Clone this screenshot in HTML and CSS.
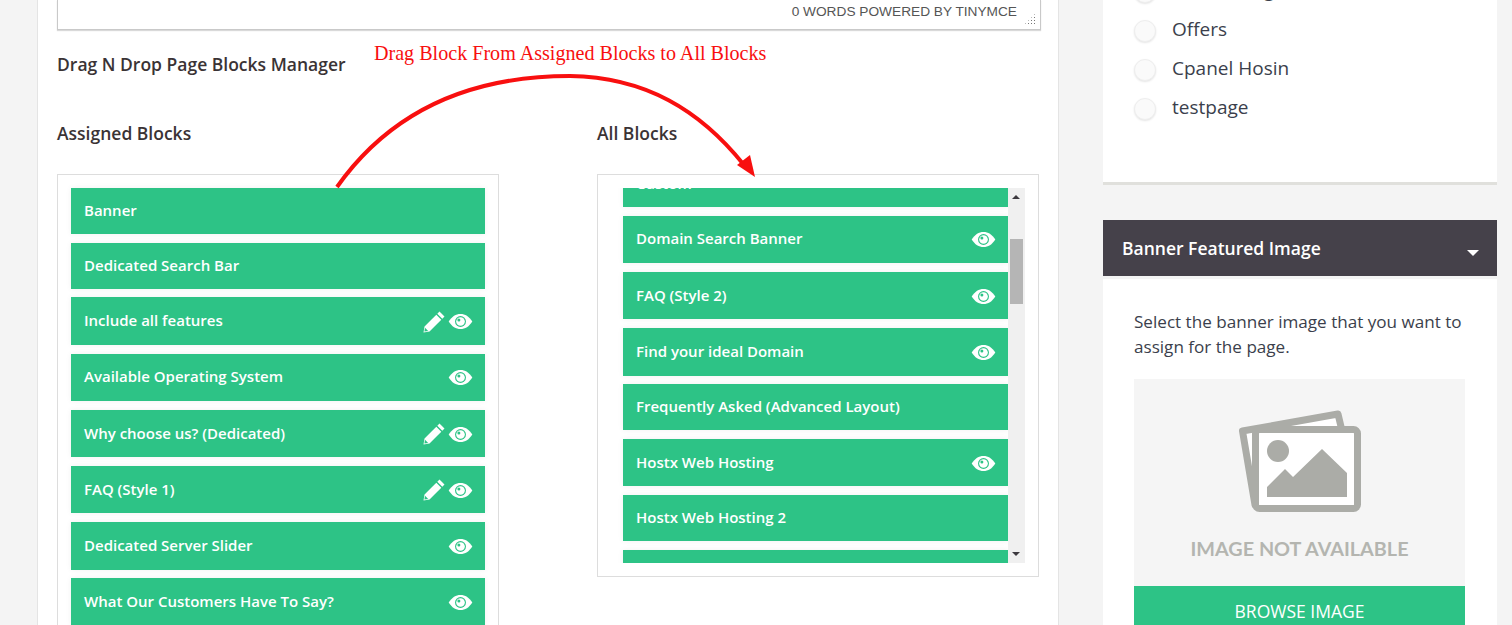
FILE: index.html

```html
<!DOCTYPE html>
<html lang="en">
<head>
    <meta charset="UTF-8">
    <title>Page Blocks Manager</title>
    <link rel="stylesheet" href="styles.css">
</head>
<body>
    <svg width="0" height="0" class="defs">
        <symbol id="eye" viewBox="0 0 26 18">
            <path d="M0.5 9C4 3.5 8 1 13 1s9 2.500 12.500 8C22 14.500 18 17 13 17S4 14.500 0.500 9z" fill="#fff"/>
            <circle cx="13" cy="9" r="5.800" fill="#2dc386"/>
            <circle cx="13" cy="9" r="4.600" fill="#fff"/>
            <circle cx="11.300" cy="7.300" r="1.600" fill="#2dc386"/>
        </symbol>
        <symbol id="pencil" viewBox="0 0 22 22">
            <path d="M16.500 0.500l5 5-2.200 2.200-5-5zM13.300 3.700l5 5L6.500 20.500 0.500 21.500l1-6z" fill="#fff"/>
            <path d="M2 16.800l3.200 3.200-3.800.6z" fill="#2dc386"/>
        </symbol>
    </svg>

    <div class="page">
        <div class="main">
            <div class="editor">
                <span class="editor-status">0 WORDS POWERED BY TINYMCE</span>
                <span class="grip"></span>
            </div>
            <h3 class="manager-title">Drag N Drop Page Blocks Manager</h3>
            <div class="columns">
                <div class="column">
                    <h4>Assigned Blocks</h4>
                    <div class="block-box">
                        <div class="block short">Banner</div>
                        <div class="block short">Dedicated Search Bar</div>
                        <div class="block">Include all features
                            <span class="icons"><svg class="pencil"><use href="#pencil"/></svg><svg class="eye"><use href="#eye"/></svg></span></div>
                        <div class="block">Available Operating System
                            <span class="icons"><svg class="eye"><use href="#eye"/></svg></span></div>
                        <div class="block">Why choose us? (Dedicated)
                            <span class="icons"><svg class="pencil"><use href="#pencil"/></svg><svg class="eye"><use href="#eye"/></svg></span></div>
                        <div class="block">FAQ (Style 1)
                            <span class="icons"><svg class="pencil"><use href="#pencil"/></svg><svg class="eye"><use href="#eye"/></svg></span></div>
                        <div class="block">Dedicated Server Slider
                            <span class="icons"><svg class="eye"><use href="#eye"/></svg></span></div>
                        <div class="block">What Our Customers Have To Say?
                            <span class="icons"><svg class="eye"><use href="#eye"/></svg></span></div>
                    </div>
                </div>
                <div class="column">
                    <h4>All Blocks</h4>
                    <div class="block-box all-box">
                        <div class="scroll-list">
                            <div class="block short first">Custom</div>
                            <div class="block">Domain Search Banner
                                <span class="icons"><svg class="eye"><use href="#eye"/></svg></span></div>
                            <div class="block">FAQ (Style 2)
                                <span class="icons"><svg class="eye"><use href="#eye"/></svg></span></div>
                            <div class="block">Find your ideal Domain
                                <span class="icons"><svg class="eye"><use href="#eye"/></svg></span></div>
                            <div class="block short">Frequently Asked (Advanced Layout)</div>
                            <div class="block">Hostx Web Hosting
                                <span class="icons"><svg class="eye"><use href="#eye"/></svg></span></div>
                            <div class="block short">Hostx Web Hosting 2</div>
                            <div class="block short"></div>
                        </div>
                        <div class="scrollbar">
                            <span class="arrow-up"></span>
                            <span class="thumb"></span>
                            <span class="arrow-down"></span>
                        </div>
                    </div>
                </div>
            </div>
        </div>

        <div class="sidebar">
            <div class="card pages-card">
                <ul class="radio-list">
                    <li><span class="radio"></span>Web Listing</li>
                    <li><span class="radio"></span>Offers</li>
                    <li><span class="radio"></span>Cpanel Hosin</li>
                    <li><span class="radio"></span>testpage</li>
                </ul>
            </div>
            <div class="card-head">Banner Featured Image <span class="caret"></span></div>
            <div class="card image-card">
                <p>Select the banner image that you want to assign for the page.</p>
                <div class="placeholder">
                    <svg class="photo" viewBox="0 0 130 112" width="130" height="112">
                        <path d="M7.500 26L103 9L108 30L20 100z" fill="#fff" stroke="#abaca7" stroke-width="7" stroke-linejoin="round"/>
                        <rect x="20.500" y="24.500" width="102" height="79" rx="4" fill="#fff" stroke="#abaca7" stroke-width="7"/>
                        <circle cx="43" cy="46" r="11" fill="#abaca7"/>
                        <path d="M32 92V82L50 64L58 72L87 44L112 68V92z" fill="#abaca7"/>
                    </svg>
                    <span class="no-image">IMAGE NOT AVAILABLE</span>
                </div>
                <div class="browse">BROWSE IMAGE</div>
            </div>
        </div>

        <div class="note">Drag Block From Assigned Blocks to All Blocks</div>
        <svg class="arrow" width="1512" height="625" viewBox="0 0 1512 625">
            <path d="M337 187C395 105 480 76 570 76C645 77 700 110 744 165" fill="none" stroke="#f80f0f" stroke-width="4"/>
            <path d="M755 177L737 165L750 155z" fill="#f80f0f"/>
        </svg>
    </div>
</body>
</html>
```

FILE: styles.css

```css
* {
    box-sizing: border-box;
}
html, body {
    margin: 0;
    height: 625px;
    overflow: hidden;
}
body {
    font-family: "Open Sans", Arial, sans-serif;
    background-color: #f4f4f4;
    color: #333;
}
.defs {
    display: block;
    position: absolute;
}
.page {
    display: flex;
    align-items: flex-start;
    padding-left: 37px;
    height: 625px;
    overflow: hidden;
}

/* left panel */
.main {
    width: 1022px;
    height: 625px;
    padding: 0 17px 0 19px;
    background: white;
    border-left: 1px solid #e4e4e4;
    border-right: 1px solid #e4e4e4;
}
.editor {
    display: flex;
    align-items: center;
    justify-content: flex-end;
    height: 30px;
    padding: 0 23px 6px 0;
    border: 1px solid #c9c9c9;
    border-top: none;
    box-shadow: 0 1px 1px rgba(0, 0, 0, 0.15);
    font-family: "Liberation Sans", Arial, sans-serif;
    font-size: 13.700px;
    color: #555;
    position: relative;
}
.grip {
    position: absolute;
    right: 4px;
    bottom: 4px;
    width: 12px;
    height: 12px;
    background-image: radial-gradient(circle, #777 1px, transparent 1px);
    background-size: 3px 3px;
    clip-path: polygon(100% 0, 100% 100%, 0 100%);
}
.manager-title {
    margin: 22px 0 0;
    font-size: 17.500px;
    line-height: 24px;
    font-weight: 600;
    color: #3a3335;
}
.columns {
    display: flex;
    gap: 98px;
    margin-top: 45px;
}
.column {
    width: 442px;
}
.column h4 {
    margin: 0 0 29px;
    font-size: 17.500px;
    line-height: 24px;
    font-weight: 600;
    color: #3a3335;
}
.block-box {
    padding: 13px;
    border: 1px solid #ddd;
}
.block {
    display: flex;
    align-items: center;
    justify-content: space-between;
    height: 47.500px;
    margin-bottom: 8.700px;
    padding: 0 12px 2px 13px;
    background-color: #2dc386;
    color: #fff;
    font-size: 15px;
    font-weight: 600;
    box-shadow: 0 0 6px rgba(0, 0, 0, 0.06);
}
.block.short {
    height: 46px;
}
.icons {
    display: flex;
    align-items: center;
    gap: 3px;
    margin-top: 3px;
    flex-shrink: 0;
}
.eye {
    width: 25px;
    height: 17px;
}
.pencil {
    width: 22px;
    height: 22px;
}

/* all blocks */
.all-box {
    display: flex;
    height: 403px;
}
.scroll-list {
    width: 397px;
    padding-left: 12px;
    height: 375px;
    overflow: hidden;
}
.all-box .block {
    width: 385px;
}
.all-box .first {
    margin-top: -27px;
}
.scrollbar {
    width: 17px;
    height: 375px;
    padding: 0 2px;
    display: flex;
    flex-direction: column;
    align-items: center;
    background: #f0f0f0;
    position: relative;
}
.arrow-up, .arrow-down {
    position: absolute;
    left: 4px;
    width: 0;
    height: 0;
    border-left: 4px solid transparent;
    border-right: 4px solid transparent;
}
.arrow-up {
    top: 7px;
    border-bottom: 4px solid #3d3a3f;
}
.arrow-down {
    bottom: 7px;
    border-top: 4px solid #3d3a3f;
}
.thumb {
    width: 13px;
    height: 65px;
    margin-top: 51px;
    background: #b5b5b5;
}

/* sidebar */
.sidebar {
    width: 394px;
    margin-left: 44px;
}
.card {
    background: white;
}
.pages-card {
    height: 185px;
    border-bottom: 3px solid #e0e0dc;
    overflow: hidden;
}
.radio-list {
    list-style: none;
    margin: -30px 0 0;
    padding: 0 0 0 31px;
}
.radio-list li {
    display: flex;
    align-items: center;
    gap: 16px;
    height: 39px;
    font-size: 19px;
    color: #3b3f4c;
}
.radio {
    width: 22px;
    height: 22px;
    margin-top: 4px;
    border-radius: 50%;
    background: #fafafa;
    border: 1px solid #eee;
    box-shadow: 0 1px 2px rgba(0, 0, 0, 0.1);
}
.card-head {
    display: flex;
    align-items: center;
    justify-content: space-between;
    height: 56px;
    margin-top: 35px;
    padding: 0 18px 0 19px;
    background-color: #45414a;
    color: #fff;
    font-size: 17.500px;
    font-weight: 600;
}
.caret {
    width: 0;
    height: 0;
    margin-top: 10px;
    border-left: 6px solid transparent;
    border-right: 6px solid transparent;
    border-top: 6px solid #fff;
}
.image-card {
    margin-top: 3px;
    padding: 30px 32px 0 31px;
}
.image-card p {
    margin: 0 0 20px;
    font-size: 17.100px;
    line-height: 25px;
    color: #3b3f4c;
}
.placeholder {
    display: flex;
    flex-direction: column;
    align-items: center;
    height: 207px;
    padding-top: 26px;
    background: #f5f5f5;
}
.no-image {
    margin-top: 19px;
    font-family: Lato, Arial, sans-serif;
    font-size: 19.800px;
    line-height: 24px;
    font-weight: 700;
    color: #b4b5b0;
}
.browse {
    height: 50px;
    padding-top: 13px;
    background-color: #2dc386;
    color: #fff;
    text-align: center;
    font-size: 17.500px;
    line-height: 24px;
}

/* annotation drawn over the screenshot */
.note {
    position: absolute;
    left: 374px;
    top: 41px;
    font-family: "Liberation Serif", "Times New Roman", serif;
    font-size: 20.100px;
    line-height: 24px;
    color: #f80f0f;
}
.arrow {
    position: absolute;
    left: 0;
    top: 0;
    pointer-events: none;
}
```
